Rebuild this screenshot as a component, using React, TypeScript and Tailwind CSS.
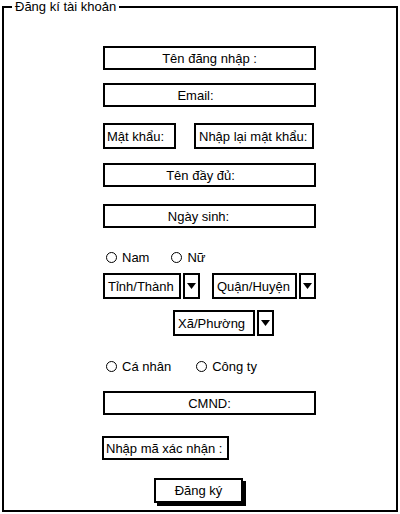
const font = { fontFamily: '"Liberation Sans", Arial, sans-serif' };

function Field({ label, className = "" }: { label: string; className?: string }) {
  return (
    <div
      className={`flex h-[24px] w-[213px] items-center justify-center whitespace-nowrap border-2 border-black bg-white text-[13px] leading-none text-black ${className}`}
    >
      {label}
    </div>
  );
}

function Select({ label, width }: { label: string; width: string }) {
  return (
    <div className="flex h-[26px] items-stretch gap-[2px]">
      <div
        className={`flex items-center whitespace-nowrap border-2 border-black bg-white px-[3px] text-[13px] leading-none ${width}`}
      >
        {label}
      </div>
      <div className="flex w-[17px] items-center justify-center border-2 border-black bg-white">
        <svg width="9" height="6" viewBox="0 0 9 6" aria-hidden="true">
          <path d="M0 0h9L4.5 6z" fill="black" />
        </svg>
      </div>
    </div>
  );
}

function Radio({ label }: { label: string }) {
  return (
    <label className="flex items-center gap-[5px] whitespace-nowrap text-[13px] leading-none">
      <span className="h-[11px] w-[11px] rounded-full border-[1.5px] border-black" />
      {label}
    </label>
  );
}

export default function App() {
  return (
    <div className="h-[514px] w-[400px] bg-white" style={font}>
      <fieldset className="mx-[2px] h-[512px] w-[396px] border-2 border-black pt-0">
        <legend className="ml-[8px] px-[3px] text-[13px] leading-[14px]">Đăng kí tài khoản</legend>
        <div className="flex flex-col pl-[99px]">
          <Field label="Tên đăng nhập :" className="mt-[32px]" />
          <Field label="Email:" className="mt-[13px] pr-[28px]" />
          <div className="mt-[16px] flex h-[26px] gap-[18px]">
            <div className="flex w-[73px] items-center whitespace-nowrap border-2 border-black px-[2px] text-[13px] leading-none">
              Mật khẩu:
            </div>
            <div className="flex w-[120px] items-center whitespace-nowrap border-2 border-black px-[3px] text-[13px] leading-none">
              Nhập lại mật khẩu:
            </div>
          </div>
          <Field label="Tên đầy đủ:" className="mt-[14px] pr-[18px]" />
          <Field label="Ngày sinh:" className="mt-[17px] pr-[22px]" />
          <div className="mt-[23px] flex h-[12px] items-center gap-[22px] pl-[3px]">
            <Radio label="Nam" />
            <Radio label="Nữ" />
          </div>
          <div className="mt-[10px] flex gap-[12px]">
            <Select label="Tỉnh/Thành" width="w-[78px]" />
            <Select label="Quận/Huyện" width="w-[85px]" />
          </div>
          <div className="mt-[11px] pl-[70px]">
            <Select label="Xã/Phường" width="w-[82px]" />
          </div>
          <div className="mt-[24px] flex h-[12px] items-center gap-[25px] pl-[3px]">
            <Radio label="Cá nhân" />
            <Radio label="Công ty" />
          </div>
          <Field label="CMND:" className="mt-[19px]" />
          <div className="-ml-[1px] mt-[21px] flex h-[24px] w-[127px] items-center whitespace-nowrap border-2 border-black px-[2px] text-[13px] leading-none">
            Nhập mã xác nhận :
          </div>
          <div className="ml-[51px] mt-[18px] flex h-[25px] w-[89px] items-center justify-center border-2 border-black bg-white text-[13px] leading-none shadow-[3px_3px_0_0_#000]">
            Đăng ký
          </div>
        </div>
      </fieldset>
    </div>
  );
}
